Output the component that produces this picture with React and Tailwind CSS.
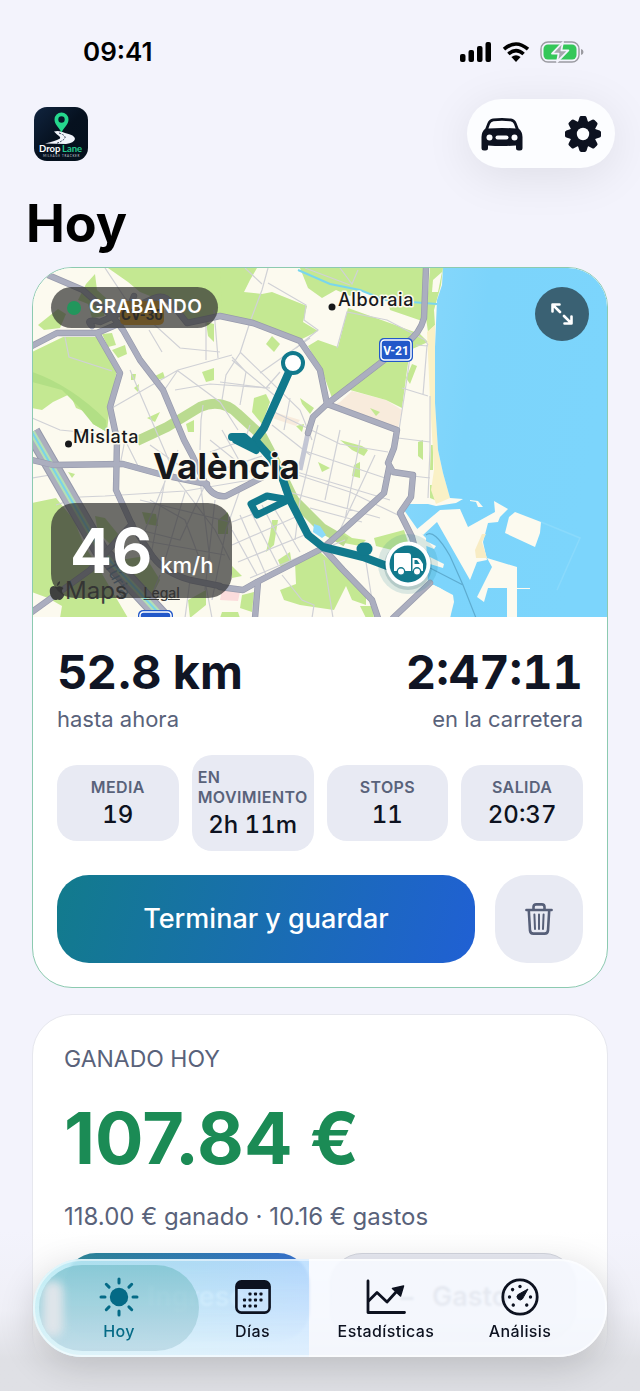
import { useState } from 'react'

const tripStats = [
  { label: 'MEDIA', value: '19' },
  { label: 'EN MOVIMIENTO', value: '2h 11m' },
  { label: 'STOPS', value: '11' },
  { label: 'SALIDA', value: '20:37' },
]

const tabs = [
  { id: 'hoy', label: 'Hoy', Icon: SunIcon },
  { id: 'dias', label: 'Días', Icon: CalendarIcon },
  { id: 'stats', label: 'Estadísticas', Icon: ChartIcon },
  { id: 'analisis', label: 'Análisis', Icon: GaugeIcon },
]

function SignalIcon() {
  return (
    <svg viewBox="0 0 32 20" className="h-5 w-8" fill="#000" aria-hidden="true">
      <rect x="0" y="12" width="5.500" height="8" rx="2" />
      <rect x="8.500" y="8" width="5.500" height="12" rx="2" />
      <rect x="17" y="4" width="5.500" height="16" rx="2" />
      <rect x="25.500" y="0" width="5.500" height="20" rx="2" />
    </svg>
  )
}

function WifiIcon() {
  return (
    <svg viewBox="0 0 28 20" className="h-5 w-7" aria-hidden="true">
      <g fill="none" stroke="#000" strokeWidth="3.6">
        <path d="M2 7.2 Q14 -3.2 26 7.2" />
        <path d="M6.4 12 Q14 5.2 21.6 12" />
      </g>
      <path d="M9.4 15 Q14 11.4 18.6 15 L14 20 Z" fill="#000" />
    </svg>
  )
}

function BatteryIcon() {
  return (
    <svg viewBox="0 0 44 22" className="h-[22px] w-11" aria-hidden="true">
      <rect x="1" y="1" width="38" height="20" rx="7" fill="none" stroke="#9b9ba1" strokeWidth="1.4" />
      <rect x="3.5" y="3.5" width="33" height="15" rx="4.5" fill="#34c759" />
      <path d="M41 8 Q43.5 8.6 43.5 11 Q43.5 13.4 41 14 Z" fill="#9b9ba1" />
      <path d="M23 1 L12 12.6 H18.6 L17 21 L28.4 9.4 H21.4 Z" fill="#a5a8ac" stroke="#f3f3fc" strokeWidth="1.8" strokeLinejoin="round" />
    </svg>
  )
}

function Logo() {
  return (
    <svg viewBox="0 0 54 54" className="size-[54px]" role="img" aria-label="Drop Lane">
      <defs>
        <linearGradient id="logoBg" x1="0" y1="0" x2="1" y2="1">
          <stop offset="0" stopColor="#10243f" />
          <stop offset="0.5" stopColor="#06111f" />
          <stop offset="1" stopColor="#04101c" />
        </linearGradient>
      </defs>
      <rect width="54" height="54" rx="13" fill="url(#logoBg)" />
      <path d="M20 24.5 Q25 23 31 26 Q41 28 41 32 Q40 36 32 37 L11 36.5 Q22 34 26 31.5 Q27 30 23 27.5 Z" fill="#f1f4fb" />
      <path d="M25 26 Q32 28.5 31 31 Q29 34 22 36.6" fill="none" stroke="#17263c" strokeWidth="0.9" strokeDasharray="2 1.2" />
      <path d="M27.500 5.500 a7 7 0 0 1 7 7 c0 5 -4.600 8 -7 13 c-2.400 -5 -7 -8 -7 -13 a7 7 0 0 1 7 -7 Z" fill="#25d78d" />
      <circle cx="27.500" cy="12.500" r="3.200" fill="#07182a" />
      <text x="5" y="45" fontFamily="Lato, sans-serif" fontSize="9.500" fontWeight="700" fill="#fff">
        Drop
      </text>
      <text x="28" y="45" fontFamily="Lato, sans-serif" fontSize="9.500" fontWeight="700" fill="#25c98e">
        Lane
      </text>
      <text x="27.500" y="50" textAnchor="middle" fontFamily="Lato, sans-serif" fontSize="3" letterSpacing="0.7" fill="#c8ced8">
        MILEAGE TRACKER
      </text>
    </svg>
  )
}

function CarIcon() {
  return (
    <svg viewBox="0 0 42 34" className="h-[34px] w-[42px]" fill="#0d1220" aria-hidden="true">
      <path
        fillRule="evenodd"
        d="M12 1.600 Q21 0.200 30 1.600 Q34 2.200 35.500 6 L37.600 11.500 Q41.500 14.500 41.500 20 V31 Q41.500 33.500 39 33.500 H37.500 Q35 33.500 35 31 V28.500 Q21 29.600 7 28.500 V31 Q7 33.500 4.500 33.500 H3 Q0.500 33.500 0.500 31 V20 Q0.500 14.500 4.400 11.500 L6.500 6 Q8 2.200 12 1.600 Z M12.500 4.300 Q9.800 4.800 9 7 L7.400 11.600 Q21 10.400 34.600 11.600 L33 7 Q32.200 4.800 29.500 4.300 Q21 3.200 12.500 4.300 Z"
      />
      <g fill="#fcfdff">
        <circle cx="8.500" cy="20.500" r="3" />
        <circle cx="33.500" cy="20.500" r="3" />
        <rect x="14.500" y="18.400" width="13" height="4.200" rx="2.100" />
      </g>
    </svg>
  )
}

function GearIcon() {
  return (
    <svg viewBox="-18 -18 36 36" className="size-9" fill="#0d1220" aria-hidden="true">
      {[0, 45, 90, 135].map((angle) => (
        <path
          key={angle}
          transform={`rotate(${angle})`}
          d="M-5 -12 L-3.600 -16.600 Q-3.200 -18 -1.800 -18 H1.800 Q3.200 -18 3.600 -16.600 L5 -12 V12 L3.600 16.600 Q3.200 18 1.800 18 H-1.800 Q-3.200 18 -3.600 16.600 L-5 12 Z"
        />
      ))}
      <circle r="13.200" />
      <circle r="6.200" fill="#fcfdff" />
    </svg>
  )
}

function ExpandIcon() {
  return (
    <svg viewBox="0 0 22 22" className="size-[22px]" fill="none" stroke="#fff" strokeWidth="2.600" strokeLinecap="round" strokeLinejoin="round" aria-hidden="true">
      <path d="M1.500 8.500 V1.500 H8.500 M1.800 1.800 L9 9" />
      <path d="M20.500 13.500 V20.500 H13.500 M20.200 20.200 L13 13" />
    </svg>
  )
}

function TrashIcon() {
  return (
    <svg viewBox="0 0 28 32" className="h-8 w-7" fill="none" stroke="#565f78" strokeWidth="2.600" strokeLinecap="round" strokeLinejoin="round" aria-hidden="true">
      <path d="M1.400 7 H26.600" />
      <path d="M8.500 6.500 V4 Q8.500 1.400 11.200 1.400 H16.800 Q19.500 1.400 19.500 4 V6.500" />
      <path d="M3.800 7.500 L5 27.500 Q5.300 30.600 8.400 30.600 H19.600 Q22.700 30.600 23 27.500 L24.200 7.500" />
      <path d="M9.400 11.500 L10 26 M14 11.500 V26 M18.600 11.500 L18 26" strokeWidth="2" />
    </svg>
  )
}

function SunIcon() {
  return (
    <svg viewBox="-20 -20 40 40" className="size-10" aria-hidden="true">
      <circle r="9.200" fill="currentColor" />
      <g stroke="currentColor" strokeWidth="3" strokeLinecap="round">
        {[0, 45, 90, 135, 180, 225, 270, 315].map((angle) => (
          <path key={angle} d="M0 -14 V-18" transform={`rotate(${angle})`} />
        ))}
      </g>
    </svg>
  )
}

function CalendarIcon() {
  const dots = [[15, 14], [20.5, 14], [26, 14], [9.500, 20], [15, 20], [20.5, 20], [26, 20], [9.500, 26], [15, 26], [20.5, 26]]
  return (
    <svg viewBox="0 0 36 34" className="h-[34px] w-9" aria-hidden="true">
      <rect x="1.400" y="1.400" width="33.200" height="31.200" rx="5" fill="#cbe3fd" fillOpacity="0.6" stroke="currentColor" strokeWidth="2.600" />
      <path d="M1 9 V6 Q1 1 6 1 H30 Q35 1 35 6 V9 Z" fill="currentColor" />
      {dots.map(([x, y]) => (
        <rect key={`${x}-${y}`} x={x - 1.5} y={y - 1.5} width="3" height="3" rx="0.800" fill="currentColor" />
      ))}
    </svg>
  )
}

function ChartIcon() {
  return (
    <svg viewBox="0 0 40 36" className="h-9 w-10" fill="none" stroke="currentColor" strokeWidth="2.800" strokeLinecap="round" strokeLinejoin="round" aria-hidden="true">
      <path d="M2 2 V33.500 H38.500" />
      <path d="M2.500 22 L11 13.500 L21 23 L31 12" />
      <path d="M37.500 7 L26.500 9.500 L34.500 17 Z" fill="currentColor" strokeWidth="1.500" />
    </svg>
  )
}

function GaugeIcon() {
  return (
    <svg viewBox="-19 -19 38 38" className="size-[38px]" aria-hidden="true">
      <circle r="17.200" fill="none" stroke="currentColor" strokeWidth="2.800" />
      {[-140, -90, -45, 0, 90, 140].map((angle) => (
        <circle key={angle} cy="-10.500" r="1.700" fill="currentColor" transform={`rotate(${angle})`} />
      ))}
      <path d="M8 -8 L2.400 2 A3 3 0 1 1 -2 -2.400 Z" fill="currentColor" stroke="currentColor" strokeWidth="1" strokeLinejoin="round" />
    </svg>
  )
}

// Map of València with the trip drawn on top
function TripMap() {
  const highways = [
    'M40 268 L48 275 L83 290 L113 317 L123 330 L140 360 L163 390 L184 440 L193 457 L205 483 Q213 498 226 496 L263 477',
    'M32 346 L57 333 L97 333 L123 322 L134 296',
    'M92 326 Q84 318 100 322 L150 300 Q164 292 172 304 L187 323 L220 316 L253 323 L300 341 L320 370 L327 404 L397 430 L394 448 L388 463 L393 472 L413 475 L411 497 L400 513 L412 537 L418 560',
    'M426 268 L424 318 Q420 334 405 344 L327 404 L313 417 L308 433',
    'M389 468 L384 493 L341 532 L323 548 L257 582 L243 590 L220 587',
    'M258 582 L255 618',
    'M323 548 L343 570 L372 600 L378 618',
    'M430 583 L393 618',
    'M97 333 L120 373 L110 407 L117 440 L116 490 L133 527 L153 557 Q165 573 190 580 L220 586',
    'M32 460 L53 465 L123 464 L163 475 L207 484',
    'M32 612 L90 570 L132 524',
  ]
  const streets = [
    'M65 337 L69 357 L112 371 M105 268 L125 298 L180 348 L220 352',
    'M112 408 L178 370 L232 355 M130 370 L160 440 L172 468 M178 370 L163 392 M178 371 L220 402 L238 430',
    'M149 330 L162 352 M206 322 L206 360 M214 310 L218 358 M175 390 L210 384 L270 388 M200 450 L201 420 L203 405',
    'M32 418 L60 430 L100 434 M32 478 L56 474 M56 505 L80 497 L105 496 L185 491 L250 480',
    'M240 352 L300 410 L312 440 M240 353 L226 375 L222 400 M240 353 L250 322 L262 290 L268 268 M232 357 L246 372 L240 405 M260 373 L310 338 M220 382 L266 388 L280 372 M232 360 L280 400',
    'M268 283 L306 305 L304 320 L318 330 L296 348 M245 268 L262 284',
    'M337 348 L347 312 L387 320 L425 340 L428 345 M427 345 L423 395 M402 388 L428 396 M411 350 L406 385 L399 430 M416 345 L428 346 M430 396 L430 450 L428 498 M398 438 L430 442 M404 475 L430 478',
    'M340 268 L352 284 L358 270 M305 268 L350 285',
    'M270 410 L340 444 L388 452 M272 425 L310 455 M290 398 L284 430 M318 425 L300 500 L295 540 M340 430 L325 500 M360 440 L345 520 M375 455 L340 530 M290 470 L390 500 M282 490 L380 518 M298 475 L350 492 L400 516 M302 450 L385 478 M310 508 L362 522',
    'M125 440 L140 470 M150 445 L200 480 M165 480 L150 560 M185 492 L165 560 M200 480 L210 560 M205 485 L180 540 L140 530 M170 470 L215 530 L230 560 M140 500 L230 522 M140 540 L225 555 M215 500 L205 590 M240 490 L226 530 L212 600 M178 450 L145 530 M150 500 L185 520 L200 560',
    'M210 440 L260 480 M210 452 L245 440 L250 425 M222 430 L240 462 L250 485 M220 470 L262 456',
    'M232 530 L257 575 M240 515 L266 575 M250 510 L278 565 M262 505 L290 560 M274 508 L300 552 M232 545 L300 515 M238 562 L312 532 M250 578 L320 548 M232 522 L282 503',
    'M282 575 L302 600 L314 605 L312 618 M366 562 L372 600 M333 545 L345 540 M324 560 L333 618',
    'M120 465 L125 440 M190 580 L185 618 M206 586 L212 618 M160 575 L150 600',
  ]
  const greens = [
    'M32 352 L63 337 L97 337 L117 370 L110 403 L107 432 L93 424 L86 412 L76 408 L70 394 L53 402 L42 410 L32 408 Z',
    'M108 268 L232 268 L232 315 L188 322 L176 305 L150 296 L140 292 L128 282 Z',
    'M38 325 L58 309 L66 314 L60 328 L44 330 Z',
    'M86 284 L95 274 L97 290 L106 298 L104 316 L92 318 L88 304 L78 300 Z',
    'M102 334 L112 333 L116 345 L108 347 Z M112 350 L125 345 L127 354 L118 358 Z M131 374 L136 374 L135 380 L131 380 Z M155 376 L163 372 L165 378 L156 380 Z M134 388 L139 384 L138 392 Z M202 372 L214 368 L214 380 L206 382 Z M206 322 L214 324 L214 342 L208 336 Z M147 418 L160 412 L155 422 Z M186 424 L194 420 L194 432 L188 432 Z M68 472 L75 474 L72 478 Z',
    'M220 268 L257 268 L250 280 L244 292 L262 294 L272 292 L307 306 L303 322 L318 331 L300 340 L262 326 L248 322 L222 314 Z',
    'M300 268 L426 268 L425 322 L390 310 L388 300 L360 290 L350 296 L336 290 L322 298 L308 288 Z',
    'M348 308 L387 322 L420 334 L428 342 L410 350 L407 370 L402 408 L386 400 L350 390 L332 398 L323 373 L308 346 L318 340 L338 347 Z',
    'M412 364 L417 366 L410 384 L406 378 Z M266 344 L272 336 L280 344 L274 352 Z M254 398 L266 394 L270 402 L262 424 L252 412 Z M430 268 L443 268 L441 285 L434 310 L435 325 L428 332 L426 318 Z',
    'M300 398 L314 408 L310 414 L302 404 Z M296 426 L304 424 L302 432 Z M340 440 L362 446 L368 450 L364 456 L352 450 Z M354 465 L360 462 L360 478 L352 476 Z M318 462 L330 468 L322 472 Z M418 442 L423 440 L423 460 L418 456 Z M370 408 L380 412 L376 416 Z',
    'M32 503 L56 498 L74 520 L84 545 L98 567 L128 618 L60 618 L62 606 L48 598 L32 592 Z',
    'M95 516 L105 518 L118 534 L112 546 L98 532 Z M142 512 L156 514 L158 526 L146 524 Z M218 520 L228 512 L228 534 L218 534 Z M120 560 L145 556 L160 580 L150 600 L135 590 Z M232 566 L242 576 L232 578 Z',
    'M295 562 L320 552 L342 570 L366 592 L366 605 L352 600 L346 586 L334 610 L300 605 L284 600 L280 590 L296 584 Z',
    'M272 520 L278 520 L274 545 L266 552 L270 535 Z M278 560 L290 552 L292 565 L282 570 Z M242 595 L254 592 L252 612 L240 608 Z M222 612 L238 612 L240 618 L220 618 Z M188 600 L206 590 L206 605 L190 618 Z M360 606 L372 606 L374 618 L366 618 Z',
    'M340 530 L352 538 L366 540 L360 546 L344 543 Z M374 538 L404 530 L408 542 L392 550 L376 546 Z M431 445 L433 445 L433 470 L430 470 Z M430 485 L434 485 L435 500 L430 498 Z',
  ]

  return (
    <svg
      viewBox="32 268 576 349"
      preserveAspectRatio="xMidYMid slice"
      className="block aspect-[574/349] w-full"
      fontFamily="Inter, sans-serif"
      role="img"
      aria-label="Mapa del trayecto por València"
    >
      <defs>
        <linearGradient id="sea" x1="0" y1="0" x2="1" y2="0.300">
          <stop offset="0" stopColor="#8ad8fb" />
          <stop offset="0.4" stopColor="#7cd4fb" />
          <stop offset="1" stopColor="#7cd5fc" />
        </linearGradient>
      </defs>
      <rect x="32" y="268" width="576" height="349" fill="#fcfaef" />
      <path d="M340 402 L352 391 L386 400 L402 410 L398 428 L336 404 Z M274 412 L300 420 L296 426 L272 418 Z" fill="#f8ebdc" />
      <path d="M222 590 L240 592 L238 601 L220 600 Z" fill="#fbdcdc" />
      {greens.map((d) => (
        <path key={d} d={d} fill="#c4e892" />
      ))}
      <path d="M32 372 Q70 385 106 420 L107 432 L93 424 L80 408 L62 390 L32 382 Z" fill="#b2df85" />
      <path d="M137 441 L167 427 L200 407 Q222 398 238 414 L262 436 Q276 462 294 500 L322 528 L346 542" fill="none" stroke="#badb90" strokeWidth="10" strokeLinejoin="round" />
      <path d="M427 332 L435 325 L435 403 L438 450 L443 473 L450 498 L436 504 L431 490 L434 470 L430 400 Z" fill="#faf1c6" />
      <path d="M298 270 L330 284 L360 290 L385 300 L437 304" fill="none" stroke="#79d6ee" strokeWidth="2" />

      {/* Sea and harbour */}
      <path d="M443 268 L442 285 L437 300 L435 347 L435 403 L438 450 L443 473 L450 498 L463 499 L456 503 L436 506 L428 504 L408 504 L404 510 L418 530 L426 538 L428 583 L440 588 L452 596 L450 618 L608 618 L608 268 Z" fill="url(#sea)" />
      <path d="M314 524 L320 526 L326 535 L322 538 L313 532 Z M414 612 L426 613 L428 618 L414 618 Z" fill="#8bdafa" />
      <g fill="#fcfaef">
        <path d="M433 280 L442 272 L438 292 L432 292 Z" />
        <path d="M416 530 L440 510 L460 509 L468 527 L495 512 L494 501 L508 509 L500 517 L498 522 L488 523 L483 542 L487 560 L477 562 L470 580 L437 522 L423 535 Z" />
        <path d="M515 512 L541 522 L540 533 L535 547 L505 533 L509 517 Z" />
        <path d="M487 558 L517 567 L517 618 L507 618 L507 588 L488 588 L484 602 L477 597 L492 567 Z" />
        <path d="M408 600 L420 583 L434 585 L453 595 L454 602 L450 618 L400 618 Z" />
        <path d="M470 500 L478 501 L483 507 L478 507 L476 502 L470 501 Z M517 588 H530 V589 H517 Z M424 540 L436 546 L434 549 L424 545 Z M428 556 L444 564 L443 568 L430 564 Z" />
      </g>
      <path d="M482 534 L486 534 L482 542 L487 558 L476 558 L475 550 Z" fill="#f8ecc4" />
      <path d="M541 522 L580 538 L557 590" fill="none" stroke="#8adafc" strokeWidth="1.500" />

      {streets.map((d) => (
        <path key={d} d={d} fill="none" stroke="#d0d1d6" strokeWidth="1.200" />
      ))}
      <path d="M308 433 L300 470" stroke="#c3c6d4" strokeWidth="5" />
      <path d="M32 432 L100 550 L165 620" fill="none" stroke="#9598aa" strokeWidth="17" />
      <path d="M32 432 L100 550 L165 620" fill="none" stroke="#abaebe" strokeWidth="15" />
      <path d="M32 432 L100 550 L165 620" fill="none" stroke="#b4e0b4" strokeWidth="6" />
      <path d="M32 432 L100 550 L165 620" fill="none" stroke="#7ad3ea" strokeWidth="2" />
      <g fill="none" strokeLinejoin="round" strokeLinecap="round">
        {highways.map((d) => (
          <path key={d} d={d} stroke="#989bad" strokeWidth="6.400" />
        ))}
        {highways.map((d) => (
          <path key={d} d={d} stroke="#abaebf" strokeWidth="5" />
        ))}
      </g>
      <path d="M426 535 Q434 528 450 556 L463 585 L476 618 M430 568 L463 585" fill="none" stroke="#5eacd0" strokeWidth="1.200" />

      {/* Place names */}
      <g fill="#17181b" stroke="#fcfaef" strokeWidth="3" paintOrder="stroke" strokeLinejoin="round">
        <circle cx="332" cy="307" r="3.500" />
        <text x="338" y="306" fontSize="18" fontWeight="500" letterSpacing="0.600">Alboraia</text>
        <circle cx="68.500" cy="444" r="3.500" />
        <text x="73" y="443" fontSize="18" fontWeight="500" letterSpacing="0.600">Mislata</text>
      </g>
      <text x="104" y="565" fontSize="16" fill="#6d90b0" transform="rotate(62 104 565)">Túria</text>

      {/* Road shields */}
      <rect x="379" y="338" width="34" height="24" rx="5" fill="#2258c9" />
      <rect x="381" y="340" width="30" height="20" rx="3.500" fill="none" stroke="#fff" strokeWidth="1.500" />
      <text x="396" y="355" fontSize="12" fontWeight="700" fill="#fff" textAnchor="middle" fontFamily="Roboto, sans-serif">V-21</text>
      <rect x="138" y="610" width="35" height="24" rx="5" fill="#2258c9" />
      <rect x="140" y="612" width="31" height="20" rx="3.500" fill="none" stroke="#fff" strokeWidth="1.500" />
      <rect x="120" y="301" width="44" height="24" rx="5" fill="#f5a916" />
      <text x="142" y="320" fontSize="15" fontWeight="700" fill="#222" textAnchor="middle" fontFamily="Roboto, sans-serif">CV-30</text>

      {/* Route */}
      <circle cx="408" cy="564" r="30" fill="#11798c" fillOpacity="0.140" />
      <g fill="none" stroke="#11798c" strokeLinecap="round" strokeLinejoin="round">
        <path d="M293 363 L264 428 L255 440 L270 457 L282 477 L290 500 L308 535 L323 547 L363 557 L387 566 L405 568" strokeWidth="8" />
        <path d="M290 500 L267 496 L251 504 L257 515 L290 499" strokeWidth="7" />
        <path d="M232 437 L244 437 L252 444 L236 440 L256 450" strokeWidth="8" />
        <path d="M363 549 H366" strokeWidth="13" />
      </g>
      <text x="153" y="479" fontSize="35" fontWeight="700" fill="#17181b" stroke="#fcfaef" strokeWidth="3" paintOrder="stroke" strokeLinejoin="round">
        València
      </text>
      <circle cx="293" cy="363" r="10" fill="#fff" stroke="#11798c" strokeWidth="4" />
      <circle cx="408" cy="566" r="24" fill="#0b4a58" fillOpacity="0.180" />
      <circle cx="408" cy="564" r="22.500" fill="#fff" />
      <circle cx="408" cy="564" r="18.500" fill="#11798c" />
      <g fill="#fff">
        <path d="M396 553 H408 Q411 553 411 556 V571 H394 V555.500 Q394 553 396 553 Z" />
        <path d="M412.500 558 H417 Q419 558 420.500 560 L423 564 V571 H412.500 Z" />
        <g stroke="#11798c" strokeWidth="1.400">
          <circle cx="401" cy="571.500" r="3.700" />
          <circle cx="417" cy="571.500" r="3.700" />
        </g>
      </g>
      <path d="M414.500 560 H417 L419.800 564 H414.500 Z" fill="#11798c" />
    </svg>
  )
}

function TripCard() {
  return (
    <section className="overflow-hidden rounded-[40px] border border-[#8ccab0] bg-white">
      <div className="relative">
        <TripMap />
        <div className="absolute bottom-3 left-4 flex items-end gap-4 text-[#3f403f]">
          <span className="flex items-center text-2xl leading-7">
            <svg viewBox="0 0 16 20" className="h-5 w-4" fill="currentColor" aria-hidden="true">
              <path d="M11 0 Q11.500 3.500 8 5 Q7.500 1.800 11 0 Z M8 6 Q11 4.200 14.500 7 Q11 10.500 15.500 14 Q12.500 20.500 8.500 18.500 Q4.500 20.500 1.500 14.500 Q-1 6 4.500 5 Z" />
            </svg>
            Maps
          </span>
          <a href="#legal" className="text-sm leading-6 font-medium underline">Legal</a>
        </div>
        <div className="absolute top-[19px] left-[18px] flex h-[41px] items-center gap-2 rounded-full bg-[#303030]/70 px-4 text-[19px] font-semibold tracking-wide text-white">
          <span className="size-[14px] rounded-full bg-[#22965c]" />
          GRABANDO
        </div>
        <button type="button" aria-label="Ampliar mapa" className="absolute top-[19px] right-[18px] flex size-[54px] items-center justify-center rounded-full bg-[#3a6173]">
          <ExpandIcon />
        </button>
        <div className="absolute bottom-[19px] left-[18px] flex h-[95px] items-end gap-2 rounded-3xl bg-[#303030]/70 px-[19px] pb-[15px] text-white">
          <span className="text-[62px] leading-[64px] font-bold">46</span>
          <span className="pb-1 text-[22px] leading-7 font-medium">km/h</span>
        </div>
      </div>

      <div className="px-6 pt-7 pb-6">
        <div className="flex justify-between">
          <div>
            <p className="text-[47px] leading-[54px] font-bold text-[#101524]">52.8 km</p>
            <p className="mt-1 text-[22px] leading-8 text-[#59627a]">hasta ahora</p>
          </div>
          <div className="text-right">
            <p className="text-[47px] leading-[54px] font-bold text-[#101524] tabular-nums">2:47:11</p>
            <p className="mt-1 text-[22px] leading-8 text-[#59627a]">en la carretera</p>
          </div>
        </div>

        <dl className="mt-5 grid grid-cols-4 items-center gap-[13px]">
          {tripStats.map((stat) => (
            <div key={stat.label} className="flex flex-col items-center gap-1 rounded-[20px] bg-[#e8eaf3] px-[6px] py-3">
              <dt className="text-[16px] leading-5 font-semibold tracking-wide text-[#59627a]">{stat.label}</dt>
              <dd className="text-2xl leading-7 font-medium text-[#0d1220] tabular-nums">{stat.value}</dd>
            </div>
          ))}
        </dl>

        <div className="mt-6 flex gap-5">
          <button type="button" className="h-[88px] flex-1 rounded-[32px] bg-linear-[105deg] from-[#127b8c] to-[#2060d4] text-[27px] font-medium text-white">
            Terminar y guardar
          </button>
          <button type="button" aria-label="Descartar trayecto" className="flex size-[88px] items-center justify-center rounded-[32px] bg-[#e8eaf3]">
            <TrashIcon />
          </button>
        </div>
      </div>
    </section>
  )
}

function EarningsCard() {
  return (
    <section className="mt-[26px] rounded-[40px] border border-[#e6e7ee] bg-white px-[31px] pt-7 pb-8">
      <h2 className="text-[23px] leading-8 text-[#59627a]">GANADO HOY</h2>
      <p className="mt-[14px] text-[72px] leading-[98px] font-bold text-[#1b8b55]">107.84 €</p>
      <p className="mt-[14px] text-2xl leading-8 text-[#59627a]">118.00 € ganado · 10.16 € gastos</p>
      <div className="mt-5 grid grid-cols-2 gap-5">
        <button type="button" className="flex h-[88px] items-center justify-center gap-4 rounded-[32px] bg-linear-[105deg] from-[#127b8c] to-[#2060d4] text-[27px] font-semibold text-white">
          <span>+</span>
          <span>Ingresos</span>
        </button>
        <button type="button" className="flex h-[88px] items-center justify-center gap-4 rounded-[32px] border border-[#cfd2dc] bg-[#e8eaf3] text-[27px] font-semibold text-[#59627a]">
          <span>−</span>
          <span>Gasto</span>
        </button>
      </div>
    </section>
  )
}

function TabBar({ active, onSelect }) {
  return (
    <nav className="relative mx-[33px] h-[98px] overflow-hidden rounded-full bg-[#f6f9ff]/70 shadow-[0_10px_36px_rgba(0,0,0,0.16)] backdrop-blur-[1px]">
      {/* Glass tint: blue over the primary button, white over the rest */}
      <div className="absolute inset-0 bg-linear-to-r from-[#a5e5ef]/70 via-[#a9d6ff]/70 via-48% to-[#f6f9ff]/50 to-48%">
        <div className="h-full w-[48%] bg-linear-to-b from-transparent to-white/50" />
      </div>
      <div className="absolute inset-0 rounded-full border-2 border-white/50" />
      <div className="absolute inset-y-[6px] right-[33px] left-[6px] grid grid-cols-[160fr_107fr_160fr_108fr]">
        {tabs.map(({ id, label, Icon }) => (
          <button
            key={id}
            type="button"
            aria-current={active === id ? 'page' : undefined}
            onClick={() => onSelect(id)}
            className={
              active === id
                ? 'relative flex flex-col items-center justify-between overflow-hidden rounded-full bg-linear-to-b from-[#7fc4d0]/80 to-[#b9d7e4]/80 pt-2 pb-[10px] text-[#046a86]'
                : 'relative flex flex-col items-center justify-between pt-2 pb-[10px] text-[#0d1220]'
            }
          >
            {active === id && <span className="absolute top-4 left-1 h-14 w-5 rounded-full bg-[#dfe5ea] blur-[4px]" />}
            <span className="flex h-12 items-center"><Icon /></span>
            <span className="text-[16px] leading-5 font-medium tracking-wide">{label}</span>
          </button>
        ))}
      </div>
    </nav>
  )
}

export default function App() {
  const [tab, setTab] = useState('hoy')

  return (
    <div className="relative h-screen overflow-hidden bg-[#f3f3fc] font-['Inter',sans-serif]">
      <div className="h-full overflow-y-auto [scrollbar-width:none]">
        {/* Status bar */}
        <div className="flex h-[99px] items-start justify-between pt-9 pr-[56px] pl-[83px]">
          <span className="text-[26px] leading-8 font-semibold text-black">09:41</span>
          <div className="flex h-8 items-center gap-[10px]">
            <SignalIcon />
            <WifiIcon />
            <BatteryIcon />
          </div>
        </div>

        <header className="flex items-center justify-between pr-[25px] pl-[34px]">
          <Logo />
          <div className="flex h-[69px] items-center gap-[42px] rounded-full bg-[#fcfdff] px-[14px] shadow-[0_8px_48px_rgba(0,0,0,0.09)]">
            <button type="button" aria-label="Vehículo"><CarIcon /></button>
            <button type="button" aria-label="Ajustes"><GearIcon /></button>
          </div>
        </header>

        <h1 className="mt-[26px] pl-[26px] text-[52px] leading-[60px] font-bold text-black">Hoy</h1>

        <main className="mt-[13px] px-8 pb-40">
          <TripCard />
          <EarningsCard />
        </main>
      </div>

      <div className="pointer-events-none absolute inset-x-0 bottom-0 h-40 bg-linear-to-b from-transparent via-[#e9eaee]/40 via-50% to-[#dfe0e5] to-80%" />
      <div className="absolute inset-x-0 bottom-[34px]">
        <TabBar active={tab} onSelect={setTab} />
      </div>
    </div>
  )
}
